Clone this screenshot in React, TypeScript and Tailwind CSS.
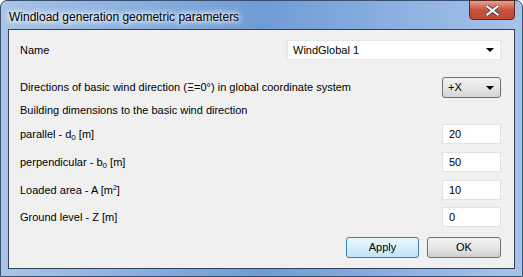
import React from 'react';

function Combo({ value }: { value: string }) {
  return (
    <div className="flex h-[20px] w-[214px] items-center justify-between border border-[#e3e5ea] bg-white pl-[5px] pr-[6px]">
      <span>{value}</span>
      <svg width="8" height="4" viewBox="0 0 8 4">
        <path d="M0 0h8L4 4z" fill="#000" />
      </svg>
    </div>
  );
}

function TextBox({ value }: { value: string }) {
  return (
    <div className="flex h-[20px] w-[59px] items-center border border-[#dfe2e8] bg-white pl-[6px]">
      {value}
    </div>
  );
}

function Row({ label, children, className }: { label: React.ReactNode; children?: React.ReactNode; className: string }) {
  return (
    <div className={`flex items-center justify-between ${className}`}>
      <span>{label}</span>
      {children}
    </div>
  );
}

export default function App() {
  return (
    <div className="h-[277px] w-[523px] overflow-hidden bg-white font-['Liberation_Sans',sans-serif] text-[11px] text-black">
      <div className="flex h-full w-full flex-col rounded-t-[7px] border border-[#3a4e6e] bg-gradient-to-r from-[#a9c4e6] via-[#6f9bd6] to-[#a6c3e9] px-[7px] pb-[7px]">
        {/* title bar */}
        <div className="flex h-[28px] items-start justify-between">
          <span className="mt-[7px] pl-[1px] text-[12px] [text-shadow:0_0_8px_#fff,0_0_6px_#fff,0_0_4px_#fff]">
            Windload generation geometric parameters
          </span>
          <div className="-mt-px flex h-[20px] w-[46px] items-center justify-center rounded-b-[4px] border border-[#5a2a22] bg-gradient-to-b from-[#e3a292] via-[#c9503c] to-[#c04a32]">
            <svg width="13" height="11" viewBox="0 0 13 11">
              <path d="M1.5 1.5l10 8M11.5 1.5l-10 8" stroke="#3a3a3a" strokeWidth="3.6" strokeLinecap="square" />
              <path d="M1.5 1.5l10 8M11.5 1.5l-10 8" stroke="#fff" strokeWidth="2.2" strokeLinecap="square" />
            </svg>
          </div>
        </div>
        {/* client area */}
        <div className="flex flex-1 flex-col border border-[#33405a] bg-[#f0f0f0] pl-[11px] pr-[13px]">
          <Row label="Name" className="mt-[10px] h-[20px]">
            <Combo value="WindGlobal 1" />
          </Row>
          <Row label="Directions of basic wind direction (Ξ=0°) in global coordinate system" className="mt-[17px] h-[21px]">
            <div className="flex h-[21px] w-[59px] items-center justify-between rounded-[3px] border border-[#707070] bg-gradient-to-b from-[#f2f2f2] via-[#e6e6e6] to-[#d4d4d4] pl-[5px] pr-[6px]">
              <span>+X</span>
              <svg width="8" height="4" viewBox="0 0 8 4">
                <path d="M0 0h8L4 4z" fill="#000" />
              </svg>
            </div>
          </Row>
          <Row label="Building dimensions to the basic wind direction" className="mt-[2px] h-[20px]" />
          <Row
            label={
              <>
                parallel - d<sub className="text-[8px]">0</sub> [m]
              </>
            }
            className="mt-[4px] h-[20px]"
          >
            <TextBox value="20" />
          </Row>
          <Row
            label={
              <>
                perpendicular - b<sub className="text-[8px]">0</sub> [m]
              </>
            }
            className="mt-[8px] h-[20px]"
          >
            <TextBox value="50" />
          </Row>
          <Row
            label={
              <>
                Loaded area - A [m<sup className="text-[7px]">2</sup>]
              </>
            }
            className="mt-[8px] h-[20px]"
          >
            <TextBox value="10" />
          </Row>
          <Row label="Ground level - Z [m]" className="mt-[7px] h-[20px]">
            <TextBox value="0" />
          </Row>
          <div className="mt-[10px] flex justify-end gap-[8px]">
            <button className="h-[21px] w-[73px] rounded-[3px] border border-[#3c7fb1] bg-gradient-to-b from-[#ebf7fd] via-[#d9effa] to-[#bfe3f6]">
              Apply
            </button>
            <button className="h-[21px] w-[74px] rounded-[3px] border border-[#707070] bg-gradient-to-b from-[#f2f2f2] via-[#e6e6e6] to-[#d0d0d0]">
              OK
            </button>
          </div>
        </div>
      </div>
    </div>
  );
}
